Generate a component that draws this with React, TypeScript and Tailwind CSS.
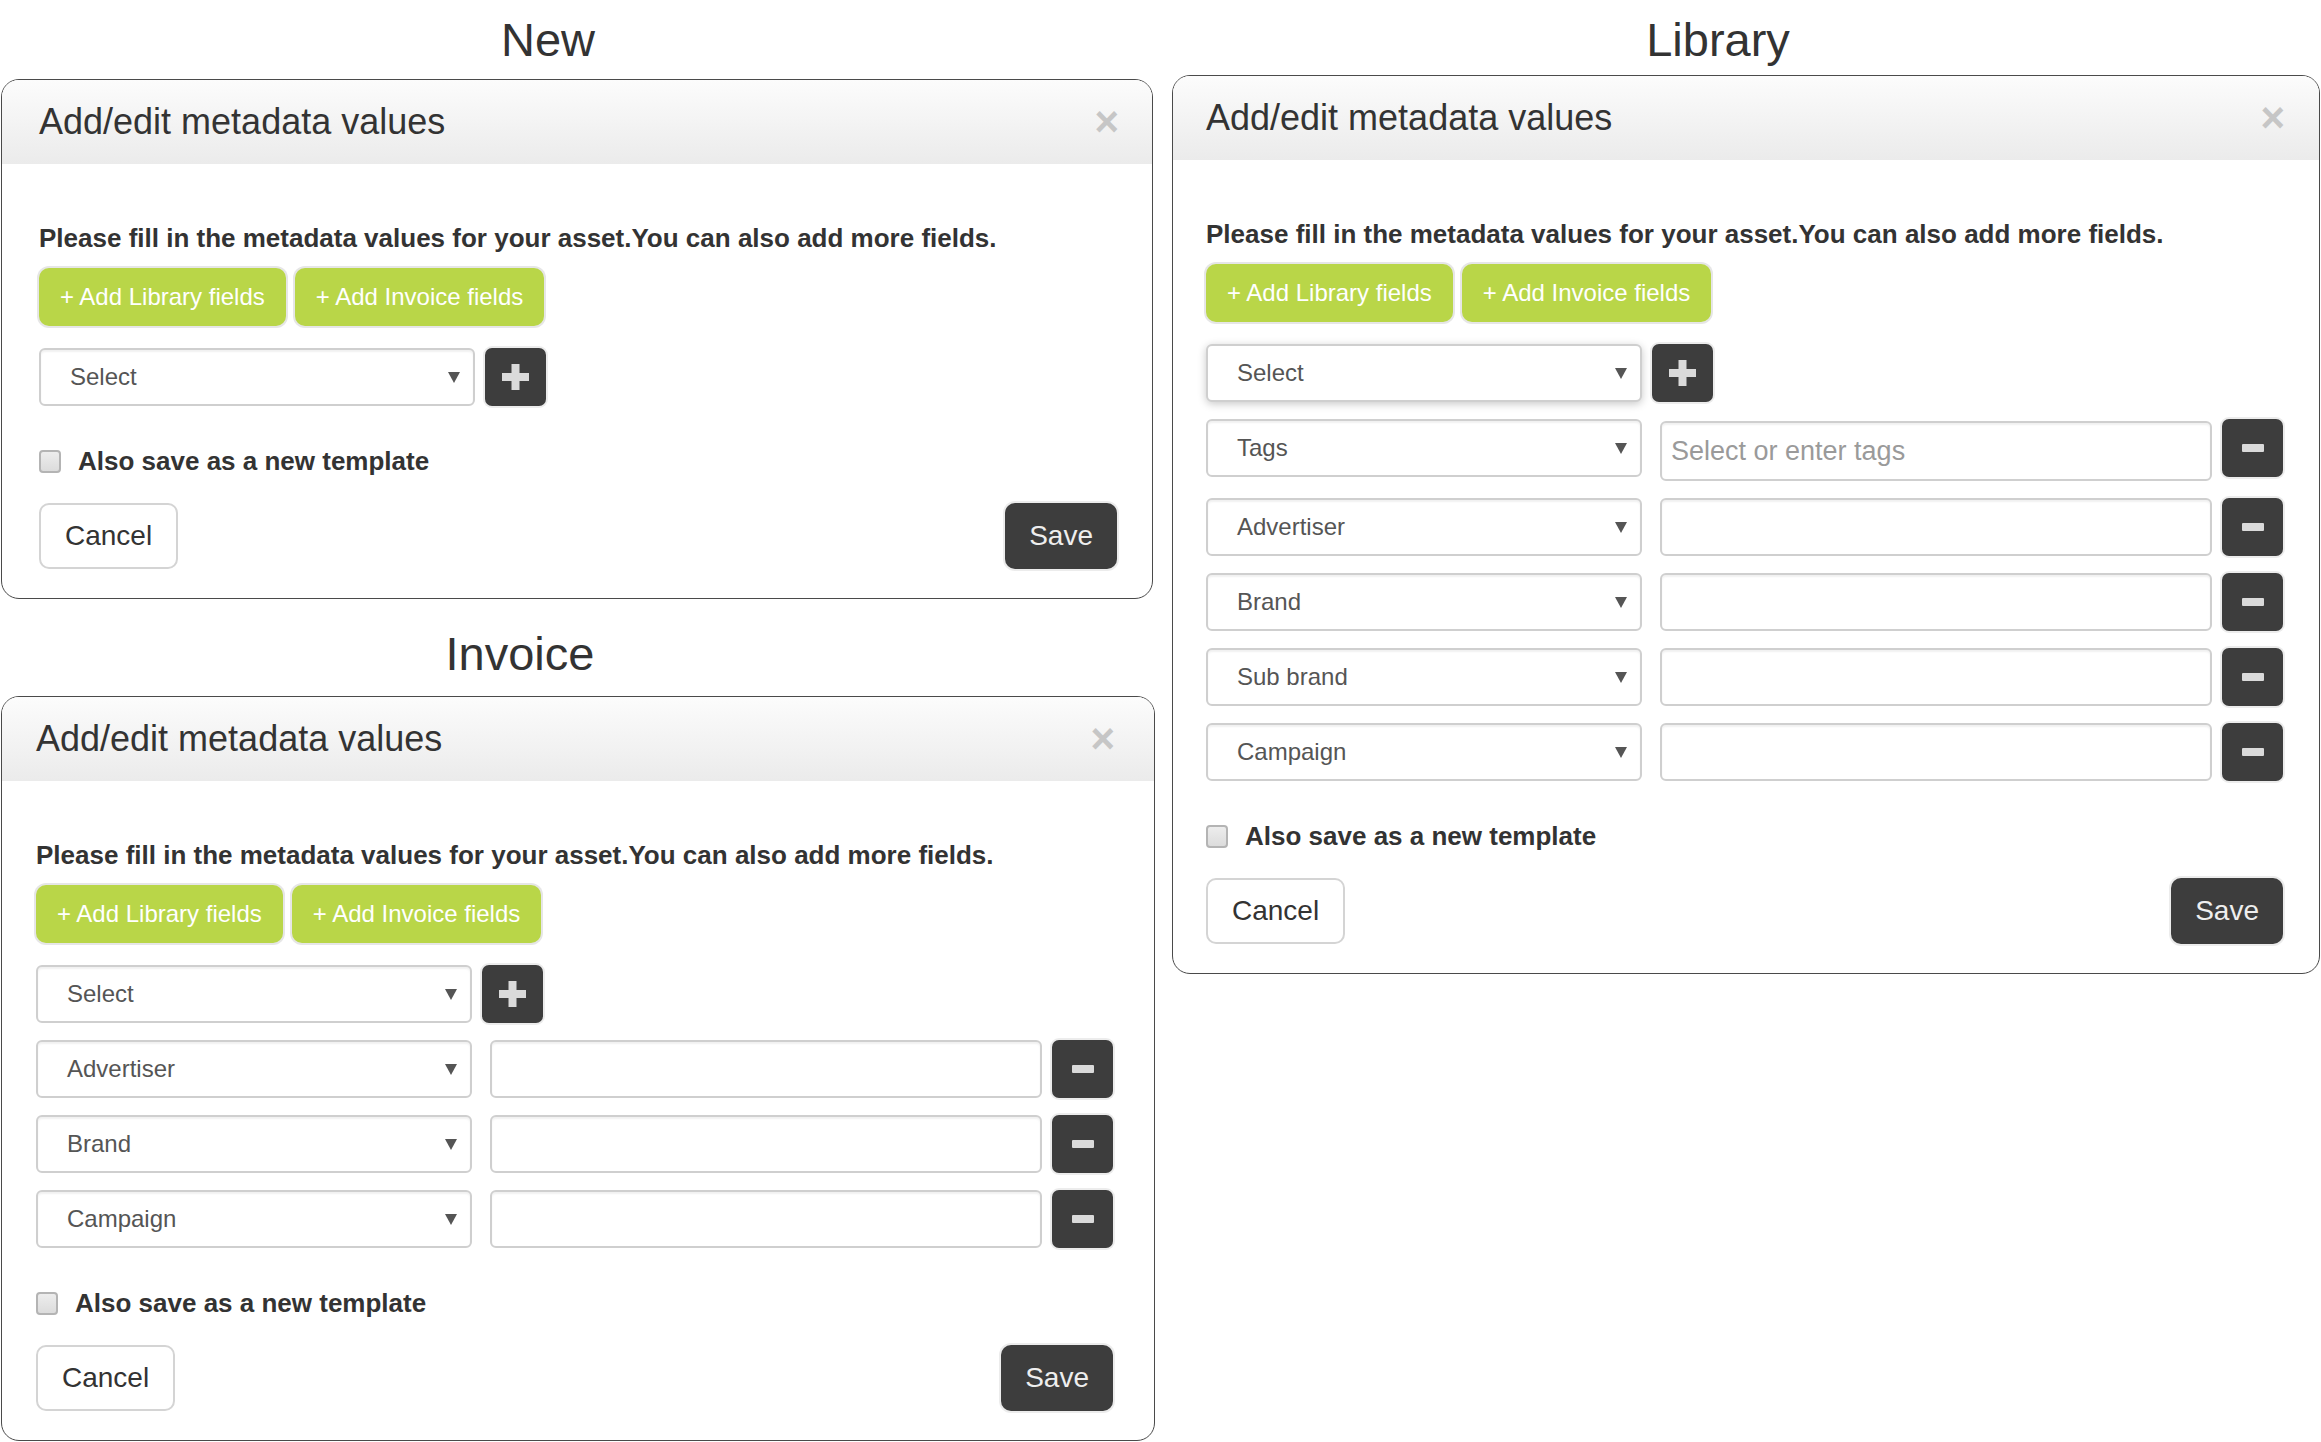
import React from "react";

type Panel = {
  fields: string[];
  tags?: boolean;
  focusSelect?: boolean;
  className: string;
  pad: string;
};

const font = { fontFamily: '"Liberation Sans", Arial, sans-serif' };

const Arrow = () => (
  <svg width="12" height="12" viewBox="0 0 12 12" className="shrink-0">
    <polygon points="0,1 12,1 6,12" fill="#555" />
  </svg>
);

const FakeSelect: React.FC<{ label: string; focus?: boolean }> = ({ label, focus }) => (
  <div
    className={`w-[436px] h-[58px] shrink-0 flex items-center justify-between pl-[29px] pr-[13px] bg-white border-2 border-[#cfcfcf] rounded-[6px] text-[24px] text-[#555] ${
      focus ? "shadow-[0_2px_9px_rgba(0,0,0,0.22)]" : "shadow-[inset_0_2px_2px_rgba(0,0,0,0.06)]"
    }`}
  >
    <span>{label}</span>
    <Arrow />
  </div>
);

const DarkIconButton: React.FC<{ kind: "plus" | "minus" }> = ({ kind }) => (
  <div className="w-[61px] h-[58px] shrink-0 flex items-center justify-center bg-[#3d3d3d] rounded-[7px] shadow-[0_0_0_2px_#ececec]">
    {kind === "plus" ? (
      <svg width="27" height="26" viewBox="0 0 27 26">
        <rect x="9.5" y="0" width="8" height="26" fill="#dadada" />
        <rect x="0" y="9" width="27" height="8" fill="#dadada" />
      </svg>
    ) : (
      <svg width="22" height="8" viewBox="0 0 22 8">
        <rect x="0" y="0" width="22" height="8" rx="1" fill="#dadada" />
      </svg>
    )}
  </div>
);

const MetadataModal: React.FC<Panel> = ({ fields, tags, focusSelect, className, pad }) => {
  return (
    <div className={`border border-[#4a4a4a] rounded-[18px] overflow-hidden bg-white ${className}`}>
      {/* Header */}
      <div className={`h-[84px] flex items-center justify-between ${pad} bg-gradient-to-b from-[#fcfcfc] to-[#ebebeb]`}>
        <h2 className="text-[36px] text-[#333] leading-none">Add/edit metadata values</h2>
        <span className="text-[42px] font-bold text-[#c6c6c6] leading-none mr-[-2px]">×</span>
      </div>

      {/* Body */}
      <div className={`${pad} pt-[58px] pb-[29px]`}>
        <p className="text-[26px] leading-[32px] font-bold text-[#333]">
          Please fill in the metadata values for your asset.You can also add more fields.
        </p>
        <div className="flex gap-[9px] mt-[14px]">
          <button className="h-[58px] px-[21px] bg-[#b9d648] text-white text-[24px] rounded-[10px] shadow-[0_0_0_2px_#e6e6e6]">
            + Add Library fields
          </button>
          <button className="h-[58px] px-[21px] bg-[#b9d648] text-white text-[24px] rounded-[10px] shadow-[0_0_0_2px_#e6e6e6]">
            + Add Invoice fields
          </button>
        </div>

        <div className="flex gap-[10px] mt-[22px]">
          <FakeSelect label="Select" focus={focusSelect} />
          <DarkIconButton kind="plus" />
        </div>

        {fields.map((f, i) => {
          const isTags = tags && i === 0;
          return (
            <div key={f} className="flex items-start mt-[17px]">
              <FakeSelect label={f} />
              <div
                className={`flex-1 ml-[18px] mr-[10px] ${
                  isTags ? "h-[60px] mt-[2px]" : "h-[58px]"
                } flex items-center pl-[9px] bg-white border-2 border-[#cfcfcf] rounded-[6px] shadow-[inset_0_2px_2px_rgba(0,0,0,0.06)]`}
              >
                {isTags && <span className="text-[27px] text-[#9a9a9a]">Select or enter tags</span>}
              </div>
              <DarkIconButton kind="minus" />
            </div>
          );
        })}

        <label className="flex items-center gap-[17px] mt-[39px] h-[32px]">
          <span className="w-[22px] h-[23px] rounded-[4px] border-2 border-[#b4b4b4] bg-gradient-to-b from-[#ededed] to-[#dcdcdc]" />
          <span className="text-[26px] font-bold text-[#333]">Also save as a new template</span>
        </label>

        <div className="flex items-center justify-between mt-[26px]">
          <button className="h-[66px] px-[24px] bg-white border-2 border-[#d4d4d4] rounded-[10px] text-[28px] text-[#333]">
            Cancel
          </button>
          <button className="h-[66px] px-[24px] bg-[#3d3d3d] rounded-[10px] text-[28px] text-[#eee] shadow-[0_0_0_2px_#ececec]">
            Save
          </button>
        </div>
      </div>
    </div>
  );
};

export default function App() {
  return (
    <div className="w-[2321px] h-[1442px] bg-white flex items-start" style={font}>
      {/* Left column */}
      <div className="w-[1154px] ml-px flex flex-col">
        <div className="h-[79px] pt-[16px] pr-[60px] text-center text-[47px] leading-[48px] text-[#333]">New</div>
        <MetadataModal fields={[]} className="w-[1152px]" pad="pl-[37px] pr-[35px]" />
        <div className="h-[97px] pt-[31px] pr-[116px] text-center text-[47px] leading-[48px] text-[#333]">Invoice</div>
        <MetadataModal
          fields={["Advertiser", "Brand", "Campaign"]}
          className="w-[1154px]"
          pad="pl-[34px] pr-[41px]"
        />
      </div>

      {/* Right column */}
      <div className="w-[1148px] ml-[17px] flex flex-col">
        <div className="h-[75px] pt-[16px] pr-[56px] text-center text-[47px] leading-[48px] text-[#333]">Library</div>
        <MetadataModal
          fields={["Tags", "Advertiser", "Brand", "Sub brand", "Campaign"]}
          tags
          focusSelect
          className="w-[1148px]"
          pad="pl-[33px] pr-[36px]"
        />
      </div>
    </div>
  );
}
